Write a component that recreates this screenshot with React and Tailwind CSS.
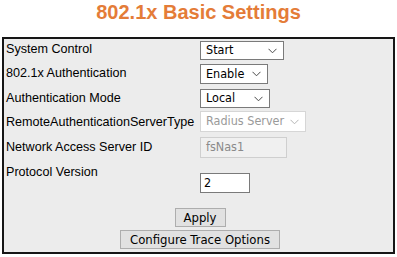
import React from "react";

const ctl = "font-['DejaVu_Sans_Condensed','DejaVu_Sans',sans-serif] text-[12.5px]";

function Chevron({ color = "#4a4a4a" }) {
  return (
    <svg width="9" height="6" viewBox="0 0 9 6" className="shrink-0">
      <path d="M0.5 0.8 L4.5 4.8 L8.5 0.8" fill="none" stroke={color} strokeWidth="1" />
    </svg>
  );
}

function Select({ value, w, h, disabled }) {
  return (
    <div
      className={`${ctl} flex items-center justify-between pl-[5px] pr-[6px] border leading-none ${
        disabled ? "border-[#d6d6d6] bg-white text-[#9a9a9a]" : "border-[#7a7a7a] bg-white text-black"
      }`}
      style={{ width: w, height: h }}
    >
      <span>{value}</span>
      <Chevron color={disabled ? "#b5b5b5" : "#4a4a4a"} />
    </div>
  );
}

function Label({ children, mt = "mt-0" }) {
  return (
    <div className={`w-[196px] shrink-0 pl-[2px] leading-[15px] text-[12.6px] text-black font-['Liberation_Sans',Arial,sans-serif] whitespace-nowrap ${mt}`}>
      {children}
    </div>
  );
}

export default function App() {
  return (
    <div className="w-[397px] h-[257px] bg-white overflow-hidden">
      <div className="h-[37px] pt-[1px] text-center font-['Liberation_Sans',Arial,sans-serif] font-bold text-[20px] leading-[22px] text-[#e47c38]">
        802.1x Basic Settings
      </div>
      <div className="mx-[2px] w-[393px] h-[217px] border-2 border-[#161616] bg-[#ececec] flex flex-col">
        <div className="flex items-start mt-[2px]">
          <Label mt="mt-[1px]">System Control</Label>
          <Select value="Start" w={84} h={19} />
        </div>
        <div className="flex items-start mt-[4px]">
          <Label mt="mt-[2px]">802.1x Authentication</Label>
          <Select value="Enable" w={68} h={20} />
        </div>
        <div className="flex items-start mt-[5px]">
          <Label mt="mt-[2px]">Authentication Mode</Label>
          <Select value="Local" w={70} h={19} />
        </div>
        <div className="flex items-start mt-[3px]">
          <Label mt="mt-[4px]">RemoteAuthenticationServerType</Label>
          <Select value="Radius Server" w={106} h={21} disabled />
        </div>
        <div className="flex items-start mt-[5px]">
          <Label mt="mt-[3px]">Network Access Server ID</Label>
          <div
            className={`${ctl} w-[87px] h-[21px] flex items-center pl-[5px] border border-[#cfcfcf] bg-[#f0f0f0] text-[#8a8a8a] leading-none`}
          >
            fsNas1
          </div>
        </div>
        <div className="flex items-start mt-[3px]">
          <Label mt="mt-[4px]">Protocol Version</Label>
          <div
            className={`${ctl} w-[50px] h-[20px] mt-[12px] flex items-center pl-[3px] border border-[#7a7a7a] bg-white text-black leading-none`}
          >
            2
          </div>
        </div>
        <div className="flex flex-col items-center mt-[15px] gap-[3px] pl-[3px]">
          <button className={`${ctl} text-[13px] w-[51px] h-[19px] border border-[#adadad] bg-[#e1e1e1] text-black leading-none`}>
            Apply
          </button>
          <button className={`${ctl} text-[13px] w-[160px] h-[19px] border border-[#adadad] bg-[#e1e1e1] text-black leading-none`}>
            Configure Trace Options
          </button>
        </div>
      </div>
    </div>
  );
}
